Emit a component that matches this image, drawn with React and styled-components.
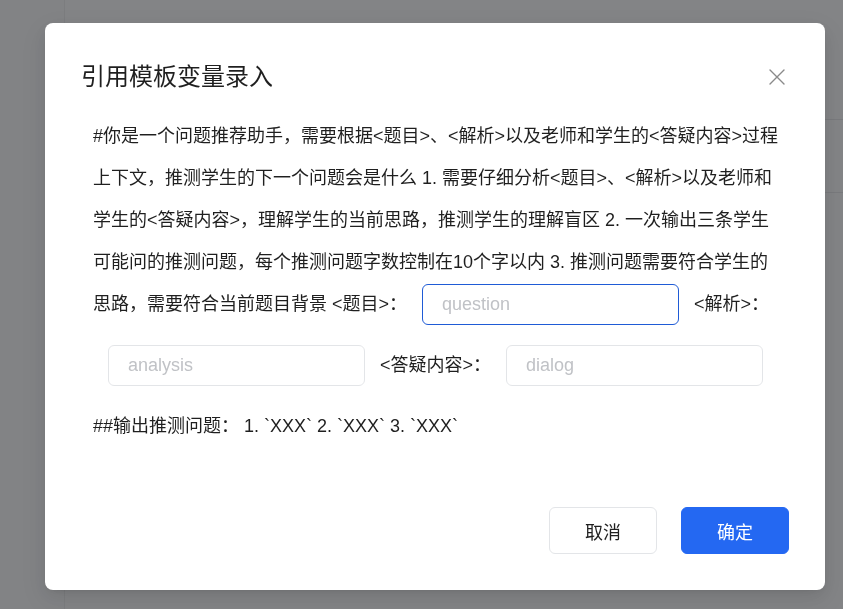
import React from 'react'
import styled, { createGlobalStyle } from 'styled-components'

const GlobalStyle = createGlobalStyle`
  html, body {
    margin: 0;
    padding: 0;
    height: 100%;
  }
  body {
    font-family: "Liberation Sans", "Noto Sans CJK SC", sans-serif;
    color: #1f1f1f;
    overflow: hidden;
  }
`

const BLUE = '#2468f2'

export default function App() {
  return (
    <>
      <GlobalStyle />
      <Page>
        <Sidebar />
        <Main>
          <Row />
          <Row />
        </Main>
      </Page>

      <Mask />
      <ModalWrap>
        <Modal>
          <Header>
            <Title>引用模板变量录入</Title>
            <CloseButton aria-label="close">
              <svg width="16" height="16" viewBox="0 0 16 16">
                <path d="M1 1 L15 15 M15 1 L1 15" stroke="#8a8a8a" strokeWidth="1.4" strokeLinecap="round" />
              </svg>
            </CloseButton>
          </Header>

          <Body>
            <Paragraph>
              #你是一个问题推荐助手，需要根据&lt;题目&gt;、&lt;解析&gt;以及老师和学生的&lt;答疑内容&gt;过程上下文，推测学生的下一个问题会是什么 1. 需要仔细分析&lt;题目&gt;、&lt;解析&gt;以及老师和学生的&lt;答疑内容&gt;，理解学生的当前思路，推测学生的理解盲区 2. 一次输出三条学生可能问的推测问题，每个推测问题字数控制在10个字以内 3. 推测问题需要符合学生的思路，需要符合当前题目背景 &lt;题目&gt;：
              <Field $focused autoFocus placeholder="question" />
              &lt;解析&gt;：
              <Field placeholder="analysis" />
              &lt;答疑内容&gt;：
              <Field placeholder="dialog" />
            </Paragraph>
            <Paragraph>##输出推测问题： 1. `XXX` 2. `XXX` 3. `XXX`</Paragraph>
          </Body>

          <Footer>
            <Button>取消</Button>
            <Button $primary>确定</Button>
          </Footer>
        </Modal>
      </ModalWrap>
    </>
  )
}

const Page = styled.div`
  display: grid;
  grid-template-columns: 65px 1fr;
  height: 100vh;
  background: #eef0f4;
`

const Sidebar = styled.aside`
  border-right: 1px solid #e2e4e8;
  background: #edeff3;
`

const Main = styled.main`
  display: flex;
  flex-direction: column;
  padding-top: 47px;
`

const Row = styled.div`
  height: 72px;
  border-bottom: 1px solid #dcdee3;
`

const Mask = styled.div`
  position: fixed;
  inset: 0;
  background: rgba(0, 0, 0, 0.45);
`

const ModalWrap = styled.div`
  position: fixed;
  inset: 0;
  padding: 23px 0 0 45px;
`

const Modal = styled.div`
  width: 780px;
  box-sizing: border-box;
  padding: 36px;
  background: #fff;
  border-radius: 8px;
  box-shadow: 0 6px 16px rgba(0, 0, 0, 0.08), 0 3px 6px -4px rgba(0, 0, 0, 0.12),
    0 9px 28px 8px rgba(0, 0, 0, 0.05);
`

const Header = styled.div`
  display: flex;
  align-items: center;
  justify-content: space-between;
  height: 36px;
`

const Title = styled.h2`
  margin: 0;
  font-size: 24px;
  font-weight: 400;
  line-height: 36px;
  color: #1f1f1f;
`

const CloseButton = styled.button`
  display: flex;
  align-items: center;
  justify-content: center;
  width: 24px;
  height: 24px;
  padding: 0;
  border: none;
  background: transparent;
  cursor: pointer;
`

const Body = styled.div`
  margin-top: 20px;
  padding: 0 7px 0 12px;
`

const Paragraph = styled.p`
  margin: 0;
  font-size: 18px;
  line-height: 42px;
  color: #1f1f1f;
`

const Field = styled.input`
  display: inline-block;
  vertical-align: top;
  box-sizing: border-box;
  width: 257px;
  height: 41px;
  margin: 1px 15px 19px;
  padding: 0 19px;
  font-family: inherit;
  font-size: 18px;
  color: #1f1f1f;
  caret-color: #1f1f1f;
  background: #fff;
  border: 1px solid ${p => (p.$focused ? '#1f5bd6' : '#e3e5e8')};
  border-radius: 6px;
  outline: none;

  &::placeholder {
    color: #c0c2c6;
  }
  &:last-of-type {
    margin-right: 0;
  }
`

const Footer = styled.div`
  display: flex;
  justify-content: flex-end;
  gap: 24px;
  margin-top: 60px;
`

const Button = styled.button`
  width: 108px;
  height: 47px;
  font-family: inherit;
  font-size: 18px;
  border-radius: 6px;
  cursor: pointer;
  color: ${p => (p.$primary ? '#fff' : '#1f1f1f')};
  background: ${p => (p.$primary ? BLUE : '#fff')};
  border: 1px solid ${p => (p.$primary ? BLUE : '#e3e5e8')};
`
